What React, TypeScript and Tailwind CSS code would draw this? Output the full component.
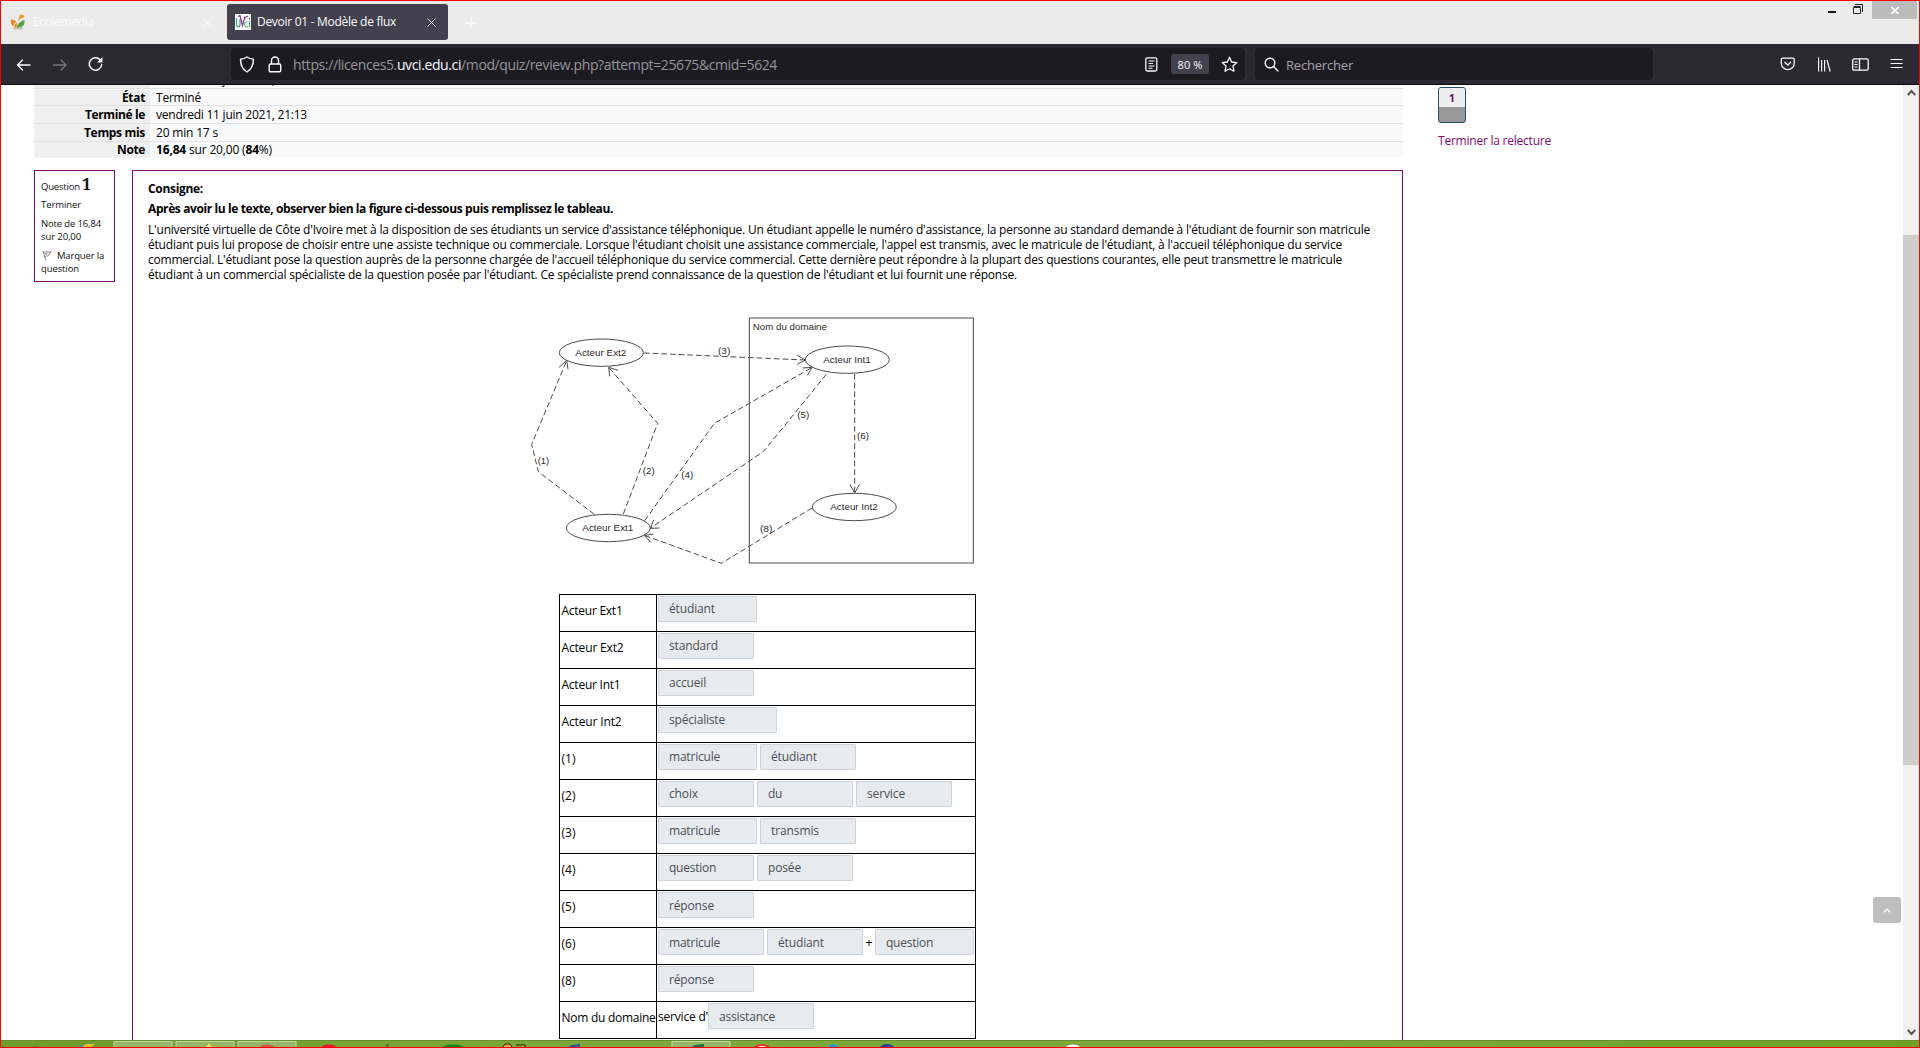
import { useLayoutEffect, useRef, type ReactNode } from "react";

/** One line of text whose tracking is adjusted so that it spans `w` pixels. */
function Fit({ w, className = "", children }: { w: number; className?: string; children: ReactNode }) {
  const ref = useRef<HTMLSpanElement>(null);
  useLayoutEffect(() => {
    const el = ref.current;
    if (!el) return;
    el.style.letterSpacing = "0px";
    const natural = el.getBoundingClientRect().width;
    const count = (el.textContent ?? "").length;
    if (count > 0) el.style.letterSpacing = `${(w - natural) / count}px`;
  }, [w]);
  return (
    <span ref={ref} className={`inline-block whitespace-pre ${className}`}>
      {children}
    </span>
  );
}

function TitleBar() {
  return (
    <div className="flex h-[43px] shrink-0 items-start bg-[#ebebeb]">
      <div className="flex h-[43px] w-[226px] items-center pl-[9px] pb-[1px]">
        <svg width="16" height="16" viewBox="0 0 16 16">
          <ellipse cx="8" cy="14.4" rx="5.5" ry="1.2" fill="#c9c2b8" />
          <path d="M1 5.500c3-.5 5.500 1.500 6 4 .2 2-.3 3-1 4C3 13.500 0 10 1 5.500Z" fill="#f08a24" />
          <path d="M14.500 6c.5 5-2 8-7.500 7.700C6.500 11 10 7 14.500 6Z" fill="#5aa43a" />
          <path d="M3 13c2-4 4-5 6-8" stroke="#fff" strokeWidth="1" fill="none" />
          <path d="M9.500 1.500c1-1 3.500-1 5 .2-.5 2-2 2.800-4 2.500L7.500 8Z" fill="#f39a2e" />
        </svg>
        <Fit w={61} className="ml-[7px] text-[12px] leading-4 text-[#fbfbfb]">Ecolemedia</Fit>
        <svg className="ml-[109px]" width="9" height="9" viewBox="0 0 9 9" stroke="#fafafa" fill="none">
          <path d="M.5.5l8 8M8.500.5l-8 8" />
        </svg>
      </div>
      <div className="mt-[3px] flex h-9 w-[221px] items-center rounded-[3px] bg-[#42414d] pl-2">
        <svg width="16" height="16" viewBox="0 0 16 16" fill="none">
          <rect width="16" height="16" fill="#fff" />
          <path d="M1.500 4v6c0 4 3.500 4 3.500 0V5" stroke="#2fa36b" strokeWidth="1.2" />
          <path d="M3 2.500l2-1 2.500 10 2.500-9" stroke="#8a2a8f" strokeWidth="1.2" />
          <path d="M12.500 8c-3-1.500-4 4.500-1 5 1 0 1.500-.5 1.500-1M14.500 7v6" stroke="#45b37c" strokeWidth="1.100" />
          <path d="M9 4l4-2M14.500 4v1.500" stroke="#8a2a8f" />
        </svg>
        <Fit w={139} className="ml-[6px] text-[12px] leading-4 text-[#fbfbfe]">Devoir 01 - Modèle de flux</Fit>
        <svg className="ml-[31px]" width="9" height="9" viewBox="0 0 9 9" stroke="#e8e8ee" fill="none">
          <path d="M.5.5l8 8M8.500.5l-8 8" />
        </svg>
      </div>
      <svg className="ml-[17px] mt-4" width="12" height="12" viewBox="0 0 12 12" stroke="#fafafa" fill="none">
        <path d="M6 0v12M0 6h12" strokeWidth="1.300" />
      </svg>
      <div className="ml-auto flex items-start pr-[2px]">
        <div className="mt-[10px] h-[2px] w-2 bg-[#1c1c1c]" />
        <svg className="ml-[17px] mt-[3px]" width="10" height="10" viewBox="0 0 10 10" fill="none" stroke="#222">
          <path d="M.5 3.500h7v6h-7zM.5 2.500h7M2 .5h7.500V8" />
        </svg>
        <div className="ml-[9px] flex h-[18px] w-[45px] items-center justify-center bg-[#bcbcbc]">
          <svg width="8" height="7" viewBox="0 0 8 7" stroke="#fff" strokeWidth="1.700">
            <path d="M.5 0l7 7M7.500 0l-7 7" />
          </svg>
        </div>
      </div>
    </div>
  );
}

function ToolBar() {
  return (
    <div className="flex h-[41px] shrink-0 items-center border-b border-[#0c0c0d] bg-[#2b2a33] text-[#fbfbfe]">
      <svg className="ml-[15px] mt-[1px]" width="16" height="14" viewBox="0 0 16 14" fill="none" stroke="#fbfbfe" strokeWidth="1.300" strokeLinecap="round">
        <path d="M1.500 7h12.500M6.500 2L1.500 7l5 5" />
      </svg>
      <svg className="ml-[20px] mt-[1px]" width="16" height="14" viewBox="0 0 16 14" fill="none" stroke="#77767e" strokeWidth="1.300" strokeLinecap="round">
        <path d="M1.500 7H14M9 2l5 5-5 5" />
      </svg>
      <svg className="ml-5" width="16" height="16" viewBox="0 0 16 16" fill="none" stroke="#fbfbfe" strokeWidth="1.500">
        <path d="M13.700 8.500A6.200 6.200 0 1 1 12 3.700" strokeLinecap="round" />
        <path d="M14.500 1v5.500H9Z" fill="#fbfbfe" stroke="none" />
      </svg>
      <div className="ml-[127px] flex h-8 w-[1014px] items-center rounded-[4px] bg-[#1c1b22]">
        <svg className="ml-[8px]" width="16" height="17" viewBox="0 0 16 17" fill="none" stroke="#fbfbfe" strokeWidth="1.400" strokeLinejoin="round">
          <path d="M8 1c2 1.500 3.500 2 6 2.200 0 6-1.500 10-6 12.800C3.500 13.200 2 9.200 2 3.200 4.500 3 6 2.500 8 1Z" transform="translate(-.6 0) scale(1.070 1)" />
        </svg>
        <svg className="ml-[13px]" width="14" height="17" viewBox="0 0 14 17" fill="none" stroke="#fbfbfe" strokeWidth="1.400">
          <rect x="1.200" y="8" width="11.500" height="7.800" rx="1.300" />
          <path d="M3.500 8V4.500a3.500 3.500 0 0 1 7 0V8" />
        </svg>
        <Fit w={484} className="ml-[11px] mt-[2px] text-[14px] leading-5 text-[#96959c]">
          https://licences5.<span className="text-[#fbfbfe]">uvci.edu.ci</span>/mod/quiz/review.php?attempt=25675&amp;cmid=5624
        </Fit>
        <div className="ml-auto flex items-center pr-[7px]">
          <svg width="13" height="15" viewBox="0 0 13 15" fill="none" stroke="#fbfbfe" strokeWidth="1.300">
            <rect x=".8" y=".8" width="11" height="13.200" rx="1.500" />
            <path d="M3.500 4h6M3.500 6.500h4.500M3.500 9h6M3.500 11.300h4" strokeWidth="1.100" />
          </svg>
          <div className="ml-[13px] flex h-5 w-[38px] items-center justify-center rounded-[3px] bg-[#42414d]">
            <Fit w={25} className="mt-[2px] text-[11px] leading-4">80 %</Fit>
          </div>
          <svg className="ml-[12px]" width="17" height="17" viewBox="0 0 17 17" fill="none" stroke="#fbfbfe" strokeWidth="1.300" strokeLinejoin="round">
            <path d="M8.500 1.300l2.100 4.700 5.200.600-3.800 3.500 1 5.100-4.500-2.500-4.500 2.500 1-5.100L1.200 6.600 6.400 6Z" />
          </svg>
        </div>
      </div>
      <div className="ml-[10px] flex h-8 w-[398px] items-center rounded-[4px] bg-[#1c1b22]">
        <svg className="ml-[9px]" width="15" height="15" viewBox="0 0 15 15" fill="none" stroke="#fbfbfe" strokeWidth="1.400" strokeLinecap="round">
          <circle cx="6" cy="6" r="4.800" />
          <path d="M9.500 9.500l4.500 4.500" />
        </svg>
        <Fit w={67} className="ml-[7px] mt-[2px] text-[13px] leading-5 text-[#a5a4aa]">Rechercher</Fit>
      </div>
      <div className="ml-auto flex items-center pr-4">
        <svg width="16" height="14" viewBox="0 0 16 14" fill="none" stroke="#fbfbfe" strokeWidth="1.300">
          <path d="M2.500 1.200h10.500a1.200 1.200 0 0 1 1.200 1.200v4a6.400 6.200 0 0 1-12.900 0v-4a1.200 1.200 0 0 1 1.200-1.200ZM4.500 5L7.800 8 11 5" strokeLinejoin="round" />
        </svg>
        <svg className="ml-[21px]" width="15" height="15" viewBox="0 0 15 15" fill="none" stroke="#fbfbfe" strokeWidth="1.200">
          <path d="M1.600.5v14M4.600 3v11.500M7.600 3v11.500M10 3l3.200 11.500" />
        </svg>
        <svg className="ml-[20px]" width="17" height="13" viewBox="0 0 17 13" fill="none" stroke="#fbfbfe" strokeWidth="1.300">
          <rect x=".7" y=".9" width="15.500" height="11.300" rx="1.500" />
          <path d="M7.500 1v11" />
          <path d="M2.500 4h3M2.500 6.500h3M2.500 9h3" strokeWidth="1" />
        </svg>
        <svg className="ml-[21px] -mt-[1px]" width="13" height="11" viewBox="0 0 13 11" stroke="#fbfbfe" strokeWidth="1">
          <path d="M.5 1.500h12M.5 5.500h12M.5 9.500h12" />
        </svg>
      </div>
    </div>
  );
}

function SummaryRow({ label, labelW, size, children }: { label: string; labelW: number; size: string; children: ReactNode }) {
  return (
    <div className={`flex items-center border-t border-[#dee2e6] bg-[#fafafa] ${size}`}>
      <div className="flex h-full w-[116px] items-center justify-end bg-[#efefef] pr-[5px] font-bold">
        <Fit w={labelW}>{label}</Fit>
      </div>
      <div className="pl-[6px]">{children}</div>
    </div>
  );
}

function Summary() {
  return (
    <div className="text-[12px] leading-4 text-black">
      <div className="flex h-[3px] overflow-hidden bg-[#fdfdfd]">
        <div className="w-[116px] bg-[#efefef]" />
        <div className="-mt-[13px] pl-[6px]">
          <Fit w={151}>vendredi 11 juin 2021, 20:53</Fit>
        </div>
      </div>
      <SummaryRow label="État" labelW={23} size="h-[17px] pt-[1px]"><Fit w={45}>Terminé</Fit></SummaryRow>
      <SummaryRow label="Terminé le" labelW={60} size="h-[18px]"><Fit w={151}>vendredi 11 juin 2021, 21:13</Fit></SummaryRow>
      <SummaryRow label="Temps mis" labelW={61} size="h-[18px]"><Fit w={62}>20 min 17 s</Fit></SummaryRow>
      <SummaryRow label="Note" labelW={28} size="h-[17px]">
        <Fit w={116}><b>16,84</b> sur 20,00 (<b>84</b>%)</Fit>
      </SummaryRow>
    </div>
  );
}

function QuestionInfo() {
  return (
    <div className="h-[112px] w-[81px] shrink-0 border border-[#7b0a6e] pl-[6px] text-[9.500px] leading-[13px] text-[#111]">
      <div className="mt-[4px] flex h-[18px] items-baseline">
        <Fit w={39}>Question</Fit>
        <span className="ml-[2px] font-['Noto_Serif','Liberation_Serif',serif] text-[16px] leading-[18px] font-bold">1</span>
      </div>
      <div className="mt-[5px]"><Fit w={40}>Terminer</Fit></div>
      <div className="mt-[6px]"><Fit w={60}>Note de 16,84</Fit></div>
      <div><Fit w={40}>sur 20,00</Fit></div>
      <div className="mt-[6px] flex items-center">
        <svg className="ml-[1px] mr-[5px]" width="10" height="11" viewBox="0 0 10 11" fill="none" stroke="#888" strokeWidth="1">
          <path d="M1 1l3 9.500M1.500 2.500c3-2 4.500 1 7.500-1L6.500 5.500c-1.500 1-2 0-3.500 1" />
          <path d="M2 3h4L4 5.500Z" fill="#aaa" stroke="none" />
        </svg>
        <Fit w={47}>Marquer la</Fit>
      </div>
      <div><Fit w={38}>question</Fit></div>
    </div>
  );
}

type Actor = { cx: number; cy: number; name: string };
const actors: Actor[] = [
  { cx: 244, cy: 158, name: "Acteur Ext2" },
  { cx: 982, cy: 179, name: "Acteur Int1" },
  { cx: 265, cy: 684, name: "Acteur Ext1" },
  { cx: 1003, cy: 621, name: "Acteur Int2" },
];
const flows = [
  "M223 643L55 515L35 433L140 182",
  "M310 642L413 370L266 202",
  "M372 159L856 180",
  "M374 662L583 370L877 202",
  "M919 223L731 454L392 684",
  "M1004 222V578",
  "M876 624L604 790L373 706",
];
const heads = [
  "M117 202L140 181L144 208",
  "M269 229L266 202L294 211",
  "M832 166L856 180L832 193",
  "M848 204L877 202L862 226",
  "M401 660L391 685L418 684",
  "M990 554L1004 579L1018 554",
  "M392 727L373 706L400 702",
];
const marks = [
  { x: 53, y: 491, w: 34, t: "(1)" },
  { x: 368, y: 523, w: 36, t: "(2)" },
  { x: 594, y: 161, w: 37, t: "(3)" },
  { x: 484, y: 533, w: 36, t: "(4)" },
  { x: 832, y: 354, w: 36, t: "(5)" },
  { x: 1011, y: 417, w: 36, t: "(6)" },
  { x: 720, y: 697, w: 37, t: "(8)" },
];

function FlowDiagram() {
  return (
    <svg className="block" width="480" height="290" viewBox="0 0 1440 870" fontFamily="Liberation Sans, Arial, sans-serif" fontSize="29" fill="#2a2a2a">
      <g fill="none" stroke="#4a4a4a" strokeWidth="3">
        <rect x="688" y="54" width="672" height="735" />
        {actors.map((a) => (
          <ellipse key={a.name} cx={a.cx} cy={a.cy} rx="126" ry="41" />
        ))}
        {flows.map((d) => (
          <path key={d} d={d} strokeDasharray="17 9" />
        ))}
        {heads.map((d) => (
          <path key={d} d={d} />
        ))}
      </g>
      <text x="698" y="91" textLength="223" lengthAdjust="spacingAndGlyphs">Nom du domaine</text>
      {actors.map((a) => (
        <text
          key={a.name}
          x={a.cx - (a.name.includes("Ext") ? 78 : 72)}
          y={a.cy + 9}
          textLength={a.name.includes("Ext") ? 153 : 142}
          lengthAdjust="spacingAndGlyphs"
        >
          {a.name}
        </text>
      ))}
      {marks.map((m) => (
        <text key={m.t} x={m.x} y={m.y} textLength={m.w} lengthAdjust="spacingAndGlyphs">{m.t}</text>
      ))}
    </svg>
  );
}

function Answer({ text, textW, size }: { text: string; textW: number; size: string }) {
  return (
    <div className={`flex h-[26px] items-center rounded-[1px] border border-[#ced4da] bg-[#e8ebee] pl-[10px] text-[#495057] ${size}`}>
      <Fit w={textW}>{text}</Fit>
    </div>
  );
}

const S = "w-[96px]";
const M = "w-[99px]";
const L = "w-[106px]";
const LOW = "pt-[2px]";

const answers: { label: string; labelW: number; cells: ReactNode }[] = [
  { label: "Acteur Ext1", labelW: 61, cells: <Answer text="étudiant" textW={46} size={M} /> },
  { label: "Acteur Ext2", labelW: 62, cells: <Answer text="standard" textW={49} size={S} /> },
  { label: "Acteur Int1", labelW: 59, cells: <Answer text="accueil" textW={37} size={S} /> },
  { label: "Acteur Int2", labelW: 60, cells: <Answer text="spécialiste" textW={56} size="w-[119px]" /> },
  { label: "(1)", labelW: 14, cells: <><Answer text="matricule" textW={51} size={M} /><Answer text="étudiant" textW={46} size={S} /></> },
  {
    label: "(2)",
    labelW: 14,
    cells: <><Answer text="choix" textW={29} size={S} /><Answer text="du" textW={14} size={S} /><Answer text="service" textW={38} size={S} /></>,
  },
  { label: "(3)", labelW: 14, cells: <><Answer text="matricule" textW={51} size={M} /><Answer text="transmis" textW={48} size={S} /></> },
  { label: "(4)", labelW: 14, cells: <><Answer text="question" textW={47} size={S} /><Answer text="posée" textW={33} size={S} /></> },
  { label: "(5)", labelW: 14, cells: <Answer text="réponse" textW={45} size={`${S} ${LOW}`} /> },
  {
    label: "(6)",
    labelW: 14,
    cells: (
      <>
        <Answer text="matricule" textW={51} size={`${L} ${LOW}`} />
        <Answer text="étudiant" textW={46} size={`${S} ${LOW}`} />
        <span className="flex w-[6px] justify-center text-[13px] leading-[27px]">+</span>
        <Answer text="question" textW={47} size={`${M} ${LOW}`} />
      </>
    ),
  },
  { label: "(8)", labelW: 14, cells: <Answer text="réponse" textW={45} size={`${S} ${LOW}`} /> },
  {
    label: "Nom du domaine",
    labelW: 94,
    cells: <><Fit w={50} className="-mr-[3px] leading-[28px]">service d'</Fit><Answer text="assistance" textW={56} size={`${L} ${LOW}`} /></>,
  },
];

function AnswerTable() {
  return (
    <div className="w-[417px] border-t border-l border-black text-[12px] leading-4 text-black">
      {answers.map((row) => (
        <div key={row.label} className="flex h-[37px] border-r border-b border-black">
          <div className="flex w-[97px] items-center border-r border-black pl-[1.500px] pb-[5px]">
            <Fit w={row.labelW}>{row.label}</Fit>
          </div>
          <div className="flex items-start gap-[3px] pl-[1px] pt-[1px]">{row.cells}</div>
        </div>
      ))}
    </div>
  );
}

const paragraph = [
  { w: 1222, t: "L'université virtuelle de Côte d'Ivoire met à la disposition de ses étudiants un service d'assistance téléphonique. Un étudiant appelle le numéro d'assistance, la personne au standard demande à l'étudiant de fournir son matricule" },
  { w: 1194, t: "étudiant puis lui propose de choisir entre une assiste technique ou commerciale. Lorsque l'étudiant choisit une assistance commerciale, l'appel est transmis, avec le matricule de l'étudiant, à l'accueil téléphonique du service" },
  { w: 1194, t: "commercial. L'étudiant pose la question auprès de la personne chargée de l'accueil téléphonique du service commercial. Cette dernière peut répondre à la plupart des questions courantes, elle peut transmettre le matricule" },
  { w: 869, t: "étudiant à un commercial spécialiste de la question posée par l'étudiant. Ce spécialiste prend connaissance de la question de l'étudiant et lui fournit une réponse." },
];

function QuestionBody() {
  return (
    <div className="h-[900px] w-[1271px] shrink-0 border border-[#7b0a6e] text-[12px] leading-[15px] text-black">
      <div className="pl-[15px] pt-[10px] pb-[1px]">
        <div className="font-bold"><Fit w={55}>Consigne:</Fit></div>
        <div className="mt-[5px] font-bold"><Fit w={465}>Après avoir lu le texte, observer bien la figure ci-dessous puis remplissez le tableau.</Fit></div>
        <div className="mt-[6px]">
          {paragraph.map((line) => (
            <div key={line.t} className="h-[15px]"><Fit w={line.w}>{line.t}</Fit></div>
          ))}
        </div>
      </div>
      <div className="mt-[17px] pl-[387px]"><FlowDiagram /></div>
      <div className="mt-[4px] pl-[426px]"><AnswerTable /></div>
    </div>
  );
}

function SidePanel() {
  return (
    <div className="relative flex-1 pl-[35px] pt-[2px]">
      <div className="h-9 w-[28px] overflow-hidden rounded-[3px] border border-[#1f536b] bg-[#999]">
        <div className="h-[19px] bg-[#eee] text-center text-[11px] leading-[20px] font-bold text-[#7b0a6e]">1</div>
      </div>
      <div className="mt-[10px] text-[12px] leading-4 text-[#7b0a6e]"><Fit w={113}>Terminer la relecture</Fit></div>
      <div className="absolute top-[812px] right-[2px] flex h-[26px] w-[28px] items-center justify-center rounded-[3px] bg-[#bebebe]">
        <svg width="8" height="5" viewBox="0 0 8 5" fill="none" stroke="#fff" strokeWidth="1.300"><path d="M.8 4.200L4 1.200l3.200 3" /></svg>
      </div>
    </div>
  );
}

function ScrollBar() {
  return (
    <div className="flex w-4 shrink-0 flex-col items-center bg-[#f0f0f0]">
      <svg className="mt-[4px]" width="9" height="7" viewBox="0 0 9 7" fill="none" stroke="#555" strokeWidth="2"><path d="M.8 6L4.500 2l3.700 4" /></svg>
      <div className="mt-[139px] h-[530px] w-full bg-[#cdcdcd]" />
      <svg className="mt-auto mb-[4px]" width="9" height="7" viewBox="0 0 9 7" fill="none" stroke="#555" strokeWidth="2"><path d="M.8 1L4.500 5l3.700-4" /></svg>
    </div>
  );
}

function TaskBar() {
  return (
    <svg className="block shrink-0" width="1918" height="7" viewBox="1 1040 1918 7">
      <defs>
        <linearGradient id="grass">
          <stop offset="0" stopColor="#6f9c28" />
          <stop offset=".3" stopColor="#7fa83c" />
          <stop offset=".65" stopColor="#7fa83c" />
          <stop offset="1" stopColor="#6fa324" />
        </linearGradient>
      </defs>
      <rect x="1" y="1040" width="1918" height="7" fill="url(#grass)" />
      <rect x="1" y="1040" width="1918" height="1" fill="#648f2b" />
      {[114, 176, 238, 672].map((x) => (
        <rect key={x} x={x} y="1041.500" width="58" height="8" fill="#96b663" stroke="#c3d69c" />
      ))}
      <ellipse cx="35" cy="1048" rx="5" ry="2" fill="#5f7f35" />
      <path d="M82 1047l4-3h9l-4 3z" fill="#e2c02c" />
      <path d="M78 1047l3-2 3 2z" fill="#3f87b8" />
      <path d="M206 1047l3-4 3 4z" fill="#f3e04a" />
      <ellipse cx="267" cy="1048" rx="8" ry="3.500" fill="#d9534a" />
      <ellipse cx="329" cy="1048" rx="8" ry="3.500" fill="#f01828" />
      <rect x="386" y="1044" width="3" height="3" fill="#5d7547" />
      <ellipse cx="453" cy="1048.500" rx="12" ry="4" fill="#0a8a1c" />
      <path d="M503 1047l2-3h5l2 3M516 1045h9v2" fill="#f0a72a" stroke="#221" />
      <path d="M568 1047l4-2 8-1v3z" fill="#2a569f" />
      <path d="M691 1047l4-2 9-1v3z" fill="#1d7044" />
      <ellipse cx="762" cy="1048" rx="8" ry="4" fill="#e33b2b" />
      <ellipse cx="762" cy="1048.500" rx="5" ry="2.500" fill="#fff" />
      <path d="M829 1047v-2l4-1 6 3z" fill="#1c9ad6" />
      <ellipse cx="887" cy="1048" rx="7" ry="4" fill="#2a3f96" />
      <ellipse cx="1073" cy="1048" rx="7" ry="3.500" fill="#fff" />
    </svg>
  );
}

export default function App() {
  return (
    <div className="flex h-[1048px] w-[1920px] flex-col overflow-hidden border border-[#ff0000] bg-white font-['Open_Sans','Noto_Sans',sans-serif]">
      <TitleBar />
      <ToolBar />
      <div className="flex h-[955px] shrink-0 overflow-hidden">
        <div className="ml-[33px] w-[1369px] shrink-0">
          <Summary />
          <div className="mt-[12px] flex items-start justify-between">
            <QuestionInfo />
            <QuestionBody />
          </div>
        </div>
        <SidePanel />
        <ScrollBar />
      </div>
      <TaskBar />
    </div>
  );
}
